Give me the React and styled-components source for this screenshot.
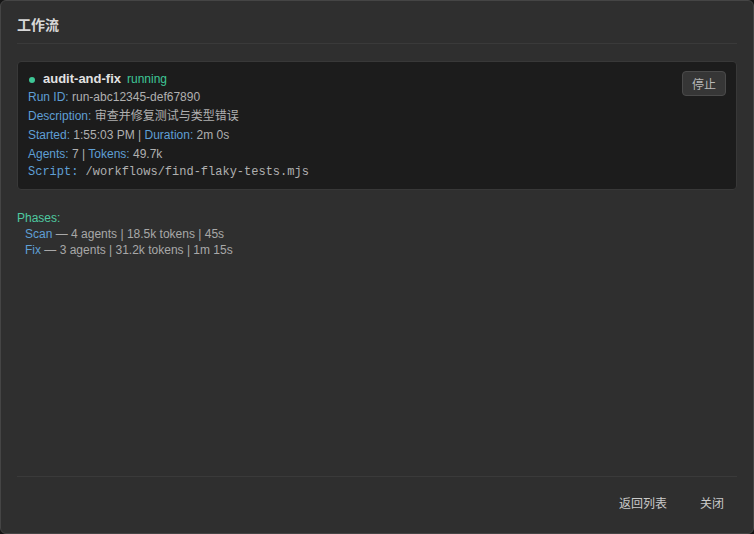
import React from 'react';
import styled, { createGlobalStyle } from 'styled-components';

const GlobalStyle = createGlobalStyle`
  html, body {
    margin: 0;
    padding: 0;
    background: #151515;
  }
  body {
    font-family: "Liberation Sans", Arial, "Noto Sans CJK SC", sans-serif;
  }
  * { box-sizing: border-box; }
`;

const Dialog = styled.div`
  width: 754px;
  height: 534px;
  display: flex;
  flex-direction: column;
  padding: 0 16px;
  background: #2f2f2f;
  border: 1px solid #454545;
  border-radius: 6px;
  color: #b0b0b0;
`;

const Header = styled.div`
  padding: 14px 0 8px;
  border-bottom: 1px solid #3a3a3a;
`;

const Title = styled.h2`
  margin: 0;
  font-size: 14px;
  line-height: 20px;
  font-weight: bold;
  color: #d8d8d8;
`;

const Body = styled.div`
  flex: 1;
  padding-top: 17px;
`;

const Card = styled.div`
  display: flex;
  align-items: flex-start;
  justify-content: space-between;
  padding: 8px 10px 8px;
  background: #1c1c1c;
  border: 1px solid #383838;
  border-radius: 4px;
`;

const Info = styled.div`
  display: flex;
  flex-direction: column;
  font-size: 12px;
`;

const NameRow = styled.div`
  display: flex;
  align-items: center;
  line-height: 18px;
`;

const Dot = styled.span`
  width: 6px;
  height: 6px;
  border-radius: 50%;
  background: #3ec796;
  margin: 1px 8px 0 1px;
`;

const Name = styled.span`
  font-size: 13px;
  font-weight: bold;
  color: #e2e2e2;
`;

const Status = styled.span`
  margin-left: 6px;
  color: #3ec796;
`;

const Row = styled.div`
  line-height: 18px;
  margin-bottom: ${p => (p.$tight ? 0 : 1)}px;
  font-family: ${p => (p.$mono
    ? '"Liberation Mono", "Courier New", monospace'
    : '"Liberation Sans", Arial, "Noto Sans CJK SC", sans-serif')};
  color: #b0b0b0;
  white-space: pre;
`;

const Label = styled.span`
  color: #5f9fd5;
`;

const StopButton = styled.button`
  margin-top: 1px;
  height: 25px;
  padding: 0 9px;
  font-family: "Noto Sans CJK SC", sans-serif;
  font-size: 12px;
  color: #b8b8b8;
  background: #363636;
  border: 1px solid #4a4a4a;
  border-radius: 4px;
`;

const Phases = styled.div`
  margin-top: 20px;
  font-size: 12px;
  line-height: 16px;
`;

const PhasesTitle = styled.div`
  color: #4ec9a0;
`;

const Phase = styled.div`
  padding-left: 8px;
  color: #a8a8a8;
`;

const Footer = styled.div`
  display: flex;
  justify-content: flex-end;
  gap: 9px;
  padding: 11px 0 17px;
  border-top: 1px solid #3a3a3a;
`;

const TextButton = styled.button`
  height: 28px;
  padding: 0 13px 0 11px;
  font-family: "Noto Sans CJK SC", sans-serif;
  font-size: 12px;
  color: #cacaca;
  background: transparent;
  border: none;
  border-radius: 4px;
`;

const phases = [
  { name: 'Scan', agents: 4, tokens: '18.5k', time: '45s' },
  { name: 'Fix', agents: 3, tokens: '31.2k', time: '1m 15s' },
];

export default function App() {
  return (
    <>
      <GlobalStyle />
      <Dialog>
        <Header>
          <Title>工作流</Title>
        </Header>
        <Body>
          <Card>
            <Info>
              <NameRow>
                <Dot />
                <Name>audit-and-fix</Name>
                <Status>running</Status>
              </NameRow>
              <Row><Label>Run ID:</Label> run-abc12345-def67890</Row>
              <Row><Label>Description:</Label> 审查并修复测试与类型错误</Row>
              <Row><Label>Started:</Label> 1:55:03 PM | <Label>Duration:</Label> 2m 0s</Row>
              <Row $tight><Label>Agents:</Label> 7 | <Label>Tokens:</Label> 49.7k</Row>
              <Row $mono $tight><Label>Script:</Label> /workflows/find-flaky-tests.mjs</Row>
            </Info>
            <StopButton>停止</StopButton>
          </Card>
          <Phases>
            <PhasesTitle>Phases:</PhasesTitle>
            {phases.map(p => (
              <Phase key={p.name}>
                <Label>{p.name}</Label> — {p.agents} agents | {p.tokens} tokens | {p.time}
              </Phase>
            ))}
          </Phases>
        </Body>
        <Footer>
          <TextButton>返回列表</TextButton>
          <TextButton>关闭</TextButton>
        </Footer>
      </Dialog>
    </>
  );
}
